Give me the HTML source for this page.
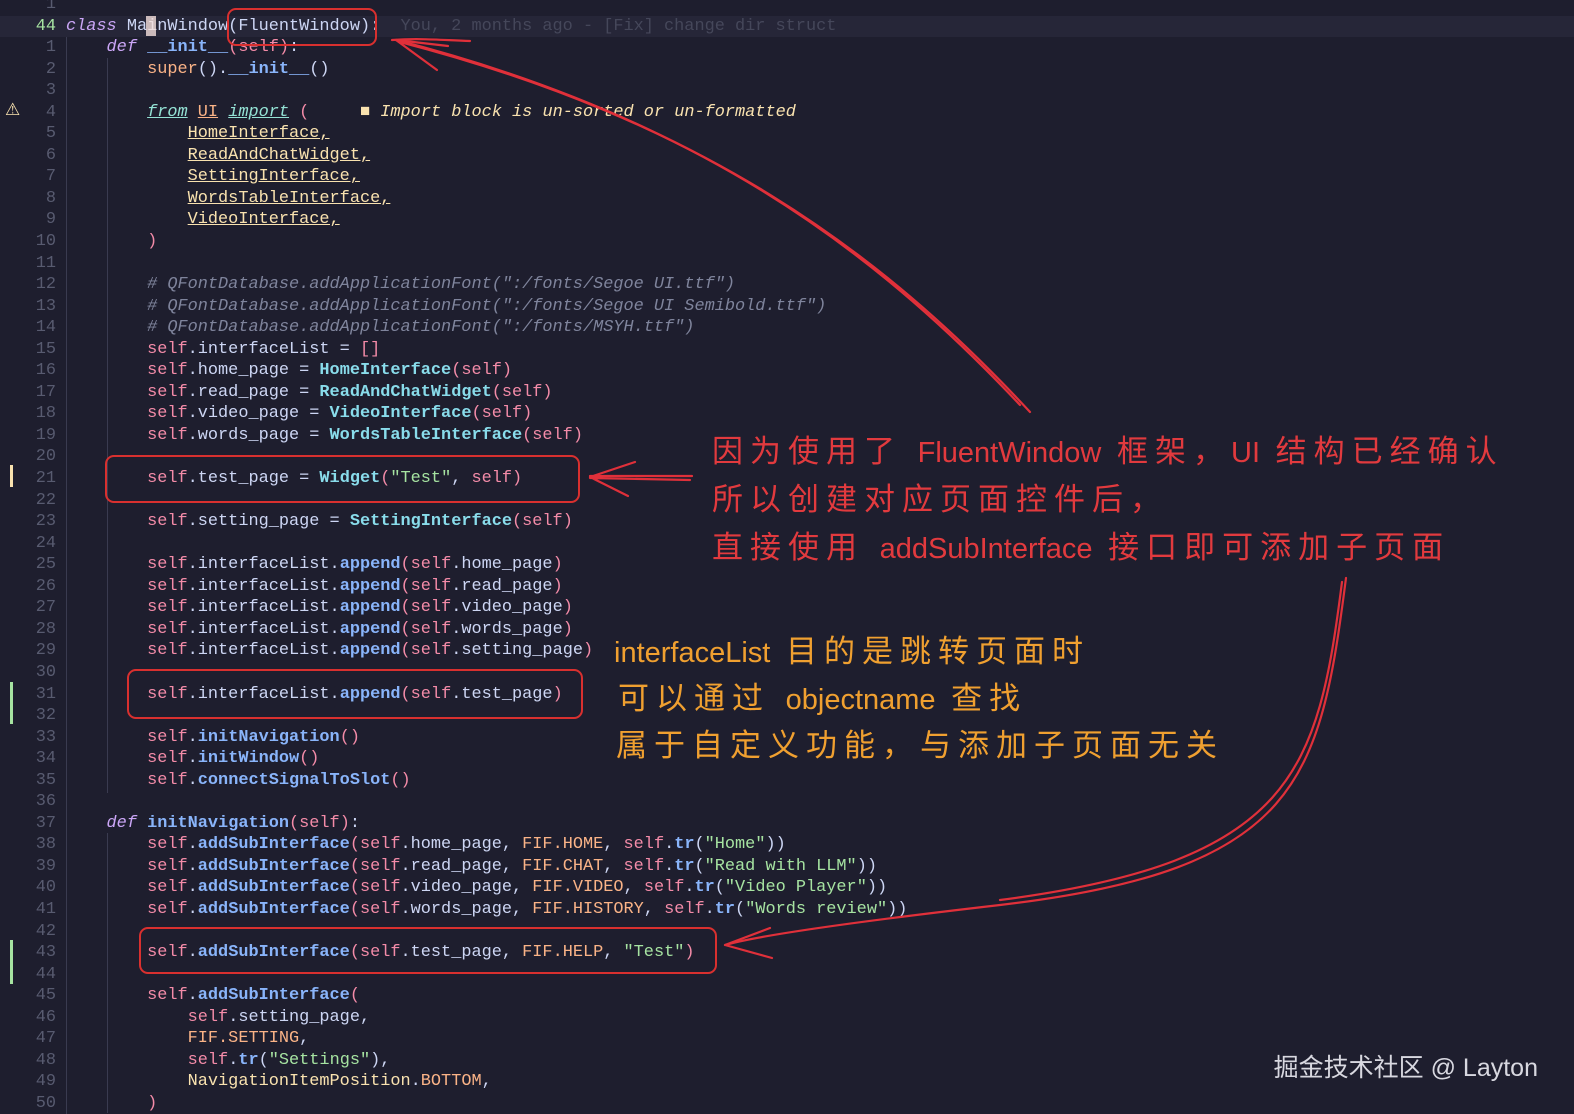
<!DOCTYPE html>
<html><head><meta charset="utf-8"><style>
html,body{margin:0;padding:0;background:#1e1e2e;width:1574px;height:1114px;overflow:hidden;position:relative}
.code{position:absolute;left:0;top:-6px;width:1574px;font-family:"Liberation Mono",monospace;font-size:16.9px;line-height:21.56px;color:#cdd6f4}
.r{height:21.56px;position:relative;white-space:pre}
.n{display:inline-block;width:56px;text-align:right;color:#585b70;margin-right:10px}
.cur{background:#262638}
.s{color:#f38ba8}.k{color:#cba6f7;font-style:italic}.f{color:#89b4fa;font-weight:bold}.c{color:#89dceb;font-weight:bold}
.g{color:#a6e3a1}.o{color:#fab387}.cm{color:#7f849c;font-style:italic}.p{color:#f38ba8}.y{color:#f9e2af;text-decoration:underline}
.guide{position:absolute;width:1px;background:#3a3b50}
.ann{position:absolute;font-family:"Liberation Sans","WenQuanYi Zen Hei","Noto Sans CJK SC",sans-serif;font-size:31px;letter-spacing:7px;white-space:nowrap}
.ann i{font-style:normal;letter-spacing:0;font-size:29px}
.red{color:#e23a3e}.org{color:#f0a030}
.box{position:absolute;border:2px solid #d9302f;border-radius:9px}
.wm{position:absolute;right:36px;top:1048px;font-family:"Liberation Sans","Noto Sans CJK SC",sans-serif;font-size:25px;color:#d8d8e0}
</style></head><body>
<div class="guide" style="left:66px;top:36px;height:1080px"></div>
<div class="guide" style="left:107px;top:58px;height:735px"></div>
<div class="guide" style="left:107px;top:833px;height:280px"></div>
<div class="code"><div class="r"><span class="n">1</span></div><div class="r cur"><span class="n" style="color:#a6e3a1">44</span><span class="k">class</span> MainWindow(FluentWindow):  <span style="color:#45475a">You, 2 months ago - [Fix] change dir struct</span></div><div class="r"><span class="n">1</span>    <span class="k">def</span> <span class="f">__init__</span><span class="p">(self)</span>:</div><div class="r"><span class="n">2</span>        <span class="o">super</span>().<span class="f">__init__</span>()</div><div class="r"><span class="n">3</span></div><div class="r"><span class="n">4</span>        <span class="k" style="color:#94e2d5;text-decoration:underline">from</span> <span class="o" style="text-decoration:underline">UI</span> <span class="k" style="color:#94e2d5;text-decoration:underline">import</span> <span class="p">(</span>     <span style="color:#f9e2af;font-style:italic">■ Import block is un-sorted or un-formatted</span></div><div class="r"><span class="n">5</span>            <span class="y">HomeInterface,</span></div><div class="r"><span class="n">6</span>            <span class="y">ReadAndChatWidget,</span></div><div class="r"><span class="n">7</span>            <span class="y">SettingInterface,</span></div><div class="r"><span class="n">8</span>            <span class="y">WordsTableInterface,</span></div><div class="r"><span class="n">9</span>            <span class="y">VideoInterface,</span></div><div class="r"><span class="n">10</span>        <span class="p">)</span></div><div class="r"><span class="n">11</span></div><div class="r"><span class="n">12</span>        <span class="cm"># QFontDatabase.addApplicationFont(":/fonts/Segoe UI.ttf")</span></div><div class="r"><span class="n">13</span>        <span class="cm"># QFontDatabase.addApplicationFont(":/fonts/Segoe UI Semibold.ttf")</span></div><div class="r"><span class="n">14</span>        <span class="cm"># QFontDatabase.addApplicationFont(":/fonts/MSYH.ttf")</span></div><div class="r"><span class="n">15</span>        <span class="s">self</span>.interfaceList = <span class="p">[]</span></div><div class="r"><span class="n">16</span>        <span class="s">self</span>.home_page = <span class="c">HomeInterface</span><span class="p">(self)</span></div><div class="r"><span class="n">17</span>        <span class="s">self</span>.read_page = <span class="c">ReadAndChatWidget</span><span class="p">(self)</span></div><div class="r"><span class="n">18</span>        <span class="s">self</span>.video_page = <span class="c">VideoInterface</span><span class="p">(self)</span></div><div class="r"><span class="n">19</span>        <span class="s">self</span>.words_page = <span class="c">WordsTableInterface</span><span class="p">(self)</span></div><div class="r"><span class="n">20</span></div><div class="r"><span class="n">21</span>        <span class="s">self</span>.test_page = <span class="c">Widget</span><span class="p">(</span><span class="g">"Test"</span>, <span class="s">self</span><span class="p">)</span></div><div class="r"><span class="n">22</span></div><div class="r"><span class="n">23</span>        <span class="s">self</span>.setting_page = <span class="c">SettingInterface</span><span class="p">(self)</span></div><div class="r"><span class="n">24</span></div><div class="r"><span class="n">25</span>        <span class="s">self</span>.interfaceList.<span class="f">append</span><span class="p">(</span><span class="s">self</span>.home_page<span class="p">)</span></div><div class="r"><span class="n">26</span>        <span class="s">self</span>.interfaceList.<span class="f">append</span><span class="p">(</span><span class="s">self</span>.read_page<span class="p">)</span></div><div class="r"><span class="n">27</span>        <span class="s">self</span>.interfaceList.<span class="f">append</span><span class="p">(</span><span class="s">self</span>.video_page<span class="p">)</span></div><div class="r"><span class="n">28</span>        <span class="s">self</span>.interfaceList.<span class="f">append</span><span class="p">(</span><span class="s">self</span>.words_page<span class="p">)</span></div><div class="r"><span class="n">29</span>        <span class="s">self</span>.interfaceList.<span class="f">append</span><span class="p">(</span><span class="s">self</span>.setting_page<span class="p">)</span></div><div class="r"><span class="n">30</span></div><div class="r"><span class="n">31</span>        <span class="s">self</span>.interfaceList.<span class="f">append</span><span class="p">(</span><span class="s">self</span>.test_page<span class="p">)</span></div><div class="r"><span class="n">32</span></div><div class="r"><span class="n">33</span>        <span class="s">self</span>.<span class="f">initNavigation</span><span class="p">()</span></div><div class="r"><span class="n">34</span>        <span class="s">self</span>.<span class="f">initWindow</span><span class="p">()</span></div><div class="r"><span class="n">35</span>        <span class="s">self</span>.<span class="f">connectSignalToSlot</span><span class="p">()</span></div><div class="r"><span class="n">36</span></div><div class="r"><span class="n">37</span>    <span class="k">def</span> <span class="f">initNavigation</span><span class="p">(self)</span>:</div><div class="r"><span class="n">38</span>        <span class="s">self</span>.<span class="f">addSubInterface</span><span class="p">(</span><span class="s">self</span>.home_page, <span class="o">FIF.HOME</span>, <span class="s">self</span>.<span class="f">tr</span>(<span class="g">"Home"</span>))</div><div class="r"><span class="n">39</span>        <span class="s">self</span>.<span class="f">addSubInterface</span><span class="p">(</span><span class="s">self</span>.read_page, <span class="o">FIF.CHAT</span>, <span class="s">self</span>.<span class="f">tr</span>(<span class="g">"Read with LLM"</span>))</div><div class="r"><span class="n">40</span>        <span class="s">self</span>.<span class="f">addSubInterface</span><span class="p">(</span><span class="s">self</span>.video_page, <span class="o">FIF.VIDEO</span>, <span class="s">self</span>.<span class="f">tr</span>(<span class="g">"Video Player"</span>))</div><div class="r"><span class="n">41</span>        <span class="s">self</span>.<span class="f">addSubInterface</span><span class="p">(</span><span class="s">self</span>.words_page, <span class="o">FIF.HISTORY</span>, <span class="s">self</span>.<span class="f">tr</span>(<span class="g">"Words review"</span>))</div><div class="r"><span class="n">42</span></div><div class="r"><span class="n">43</span>        <span class="s">self</span>.<span class="f">addSubInterface</span><span class="p">(</span><span class="s">self</span>.test_page, <span class="o">FIF.HELP</span>, <span class="g">"Test"</span><span class="p">)</span></div><div class="r"><span class="n">44</span></div><div class="r"><span class="n">45</span>        <span class="s">self</span>.<span class="f">addSubInterface</span><span class="p">(</span></div><div class="r"><span class="n">46</span>            <span class="s">self</span>.setting_page,</div><div class="r"><span class="n">47</span>            <span class="o">FIF.SETTING</span>,</div><div class="r"><span class="n">48</span>            <span class="s">self</span>.<span class="f">tr</span>(<span class="g">"Settings"</span>),</div><div class="r"><span class="n">49</span>            <span style="color:#f9e2af">NavigationItemPosition</span>.<span class="o">BOTTOM</span>,</div><div class="r"><span class="n">50</span>        <span class="p">)</span></div></div>
<div style="position:absolute;left:10px;top:465px;width:3px;height:22px;background:#f9e2af"></div>
<div style="position:absolute;left:10px;top:682px;width:3px;height:42px;background:#a6e3a1"></div>
<div style="position:absolute;left:10px;top:940px;width:3px;height:44px;background:#a6e3a1"></div>
<div style="position:absolute;left:5px;top:100px;color:#f9e2af;font-size:17px;font-family:'DejaVu Sans',sans-serif">⚠</div>
<div style="position:absolute;left:146px;top:16px;width:10px;height:20px;background:#f5e0dc;opacity:.8"></div>

<div class="box" style="left:227px;top:8px;width:146px;height:34px"></div>
<div class="box" style="left:105px;top:455px;width:471px;height:44px"></div>
<div class="box" style="left:127px;top:669px;width:452px;height:46px"></div>
<div class="box" style="left:139px;top:927px;width:574px;height:43px"></div>

<svg style="position:absolute;left:0;top:0" width="1574" height="1114" fill="none" stroke="#e0303a" stroke-width="2.2" stroke-linecap="round">
<path d="M392 40 C420 38 440 40 470 41"/>
<path d="M1030 412 C880 250 700 120 400 42"/>
<path d="M1020 405 C870 245 690 115 396 40"/>
<path d="M396 40 L437 70 M396 40 L448 46"/>
<path d="M590 478 L690 480 M590 476 L692 476 M590 477 L635 462 M590 477 L628 496"/>
<path d="M1346 578 C1320 780 1300 870 1000 905 C870 920 760 935 725 945"/>
<path d="M1342 582 C1318 770 1295 862 1000 900"/>
<path d="M725 945 L770 928 M725 945 L772 958"/>
</svg>

<div class="ann red" style="left:712px;top:426px">因为使用了 <i>FluentWindow</i> 框架，<i>UI</i> 结构已经确认</div>
<div class="ann red" style="left:712px;top:474px">所以创建对应页面控件后，</div>
<div class="ann red" style="left:712px;top:522px">直接使用 <i>addSubInterface</i> 接口即可添加子页面</div>
<div class="ann org" style="left:614px;top:626px"><i>interfaceList</i> 目的是跳转页面时</div>
<div class="ann org" style="left:618px;top:673px">可以通过 <i>objectname</i> 查找</div>
<div class="ann org" style="left:616px;top:720px">属于自定义功能，与添加子页面无关</div>
<div class="wm">掘金技术社区 @ Layton</div>
</body></html>
